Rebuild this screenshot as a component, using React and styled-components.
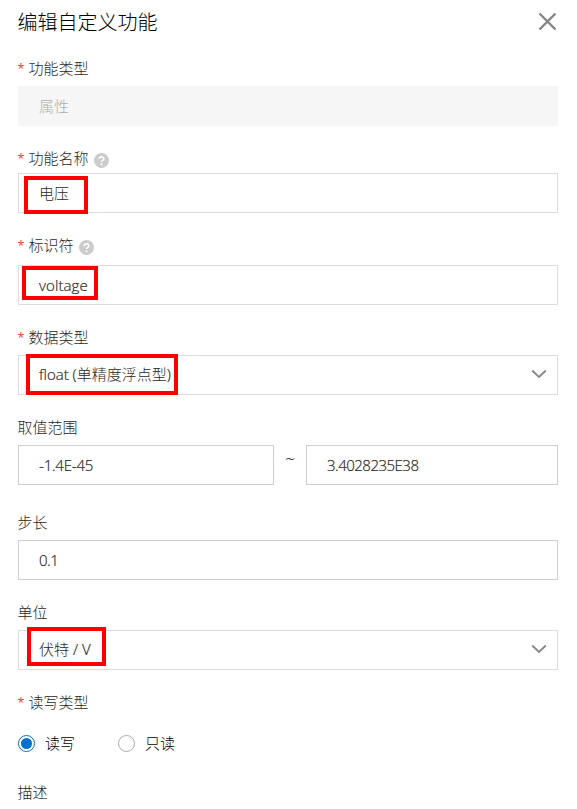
import React from "react";
import styled, { createGlobalStyle } from "styled-components";

const GlobalStyle = createGlobalStyle`
  * { box-sizing: border-box; }
  body {
    margin: 0;
    background: #fff;
    color: #282828;
    font-family: "Open Sans", "Noto Sans CJK SC", sans-serif;
    font-size: 15px;
    font-weight: 300;
  }
`;

const Panel = styled.main`
  width: 577px;
  height: 809px;
  overflow: hidden;
  padding: 0 19px 0 18px;
`;

const Header = styled.header`
  display: flex;
  align-items: center;
  justify-content: space-between;
  height: 58px;
  padding-bottom: 15px;
`;

const Title = styled.h1`
  margin: 0 0 0 -0.5px;
  color: #000;
  font: 300 20px/28px "Noto Sans CJK SC", sans-serif;
`;

const CloseButton = styled.button`
  display: flex;
  margin: 0 1px 0 0;
  padding: 0;
  border: 0;
  background: none;
`;

const Field = styled.section`
  margin-bottom: ${(p) => p.$after ?? 22}px;
`;

const Label = styled.div`
  display: flex;
  align-items: center;
  height: 20px;
  margin: 0 0 ${(p) => p.$gap ?? 8}px -0.5px;
  line-height: 20px;
  white-space: nowrap;
`;

const Star = styled.span`
  width: 11px;
  padding-top: 2px;
  color: #e8403a;
  font: 400 12.5px/20px "Open Sans", sans-serif;
`;

const HelpIcon = styled.svg`
  margin: 4px 0 0 5px;
`;

const Box = styled.div`
  position: relative;
  display: flex;
  flex: ${(p) => p.$flex ?? "initial"};
  align-items: center;
  justify-content: space-between;
  height: 40px;
  padding: 0 10px ${(p) => (p.$select ? 2 : 0)}px 20px;
  border: 1px solid ${(p) => (p.$disabled ? "#f6f6f6" : p.$strong ? "#cfcfcf" : "#dcdcdc")};
  background: ${(p) => (p.$disabled ? "#f6f6f6" : "#fff")};
  color: ${(p) => (p.$disabled ? "#b0b0b0" : "#282828")};
`;

const Value = styled.span`
  letter-spacing: ${(p) => p.$spacing ?? 0}px;
  line-height: 20px;
  white-space: nowrap;
`;

const Latin = styled.span`
  -webkit-text-stroke: 0.2px currentColor;
`;

const Highlight = styled.span`
  position: absolute;
  left: ${(p) => p.$x}px;
  top: ${(p) => p.$y}px;
  width: ${(p) => p.$w}px;
  height: ${(p) => p.$h}px;
  border: 4px solid #f00;
`;

const Range = styled.div`
  display: flex;
`;

const Tilde = styled.span`
  width: 32px;
  padding-top: 4px;
  font-size: 17px;
  -webkit-text-stroke: 0.2px currentColor;
  line-height: 20px;
  text-align: center;
`;

const RadioRow = styled.div`
  display: flex;
  gap: 43px;
  height: 20px;
  margin-top: 21px;
`;

const RadioOption = styled.label`
  display: flex;
  align-items: center;
  gap: 10px;
  color: #000;
  line-height: 20px;
`;

const Dot = styled.span`
  display: flex;
  align-items: center;
  justify-content: center;
  width: 17px;
  height: 17px;
  border: 1px solid ${(p) => (p.$checked ? "#0070cc" : "#aaa")};
  border-radius: 50%;

  &::after {
    content: "";
    width: 11px;
    height: 11px;
    border-radius: 50%;
    background: ${(p) => (p.$checked ? "#0070cc" : "transparent")};
  }
`;

const Help = () => (
  <HelpIcon width="15" height="15" viewBox="0 0 15 15">
    <circle cx="7.5" cy="7.5" r="7.5" fill="#ccc" />
    <path d="M5.2 6.1C5.2 3.1 9.8 3.1 9.8 5.7C9.8 7.4 7.5 7.2 7.5 9.1" fill="none" stroke="#fff" strokeWidth="1.6" />
    <circle cx="7.5" cy="11.2" r="1" fill="#fff" />
  </HelpIcon>
);

const Chevron = () => (
  <svg width="16" height="10" viewBox="0 0 16 10">
    <path d="M1.2 1.5L8 8L14.8 1.5" fill="none" stroke="#888" strokeWidth="1.9" />
  </svg>
);

const FieldLabel = ({ text, required, help, gap }) => (
  <Label $gap={gap}>
    {required && <Star>*</Star>}
    <span>{text}</span>
    {help && <Help />}
  </Label>
);

export default function App() {
  return (
    <>
      <GlobalStyle />
      <Panel>
        <Header>
          <Title>编辑自定义功能</Title>
          <CloseButton aria-label="关闭">
            <svg width="19" height="19" viewBox="0 0 19 19">
              <path d="M1.5 1.5L17.5 17.5M17.5 1.5L1.5 17.5" stroke="#858585" strokeWidth="2.4" />
            </svg>
          </CloseButton>
        </Header>
        <Field>
          <FieldLabel required text="功能类型" />
          <Box $disabled><Value>属性</Value></Box>
        </Field>
        <Field>
          <FieldLabel required help gap={5} text="功能名称" />
          <Box>
            <Value>电压</Value>
            <Highlight $x={5.4} $y={2} $w={64} $h={38} />
          </Box>
        </Field>
        <Field>
          <FieldLabel required help gap={10} text="标识符" />
          <Box>
            <Value $spacing={0.1}><Latin>voltage</Latin></Value>
            <Highlight $x={3.4} $y={0} $w={76} $h={34} />
          </Box>
        </Field>
        <Field>
          <FieldLabel required text="数据类型" />
          <Box $select>
            <Value><Latin>float (</Latin>单精度浮点型<Latin>)</Latin></Value>
            <Chevron />
            <Highlight $x={7} $y={-2} $w={152} $h={41} />
          </Box>
        </Field>
        <Field $after={27}>
          <FieldLabel text="取值范围" />
          <Range>
            <Box $strong $flex="0 0 256px"><Value $spacing={-0.2}><Latin>-1.4E-45</Latin></Value></Box>
            <Tilde>~</Tilde>
            <Box $strong $flex="1"><Value $spacing={-0.5}><Latin>3.4028235E38</Latin></Value></Box>
          </Range>
        </Field>
        <Field>
          <FieldLabel text="步长" />
          <Box $strong><Value $spacing={-0.5}><Latin>0.1</Latin></Value></Box>
        </Field>
        <Field>
          <FieldLabel text="单位" />
          <Box $select>
            <Value>伏特<Latin> / V</Latin></Value>
            <Chevron />
            <Highlight $x={8} $y={-4} $w={79} $h={39} />
          </Box>
        </Field>
        <Field $after={29}>
          <FieldLabel required gap={0} text="读写类型" />
          <RadioRow>
            <RadioOption><Dot $checked />读写</RadioOption>
            <RadioOption><Dot />只读</RadioOption>
          </RadioRow>
        </Field>
        <FieldLabel text="描述" />
      </Panel>
    </>
  );
}
